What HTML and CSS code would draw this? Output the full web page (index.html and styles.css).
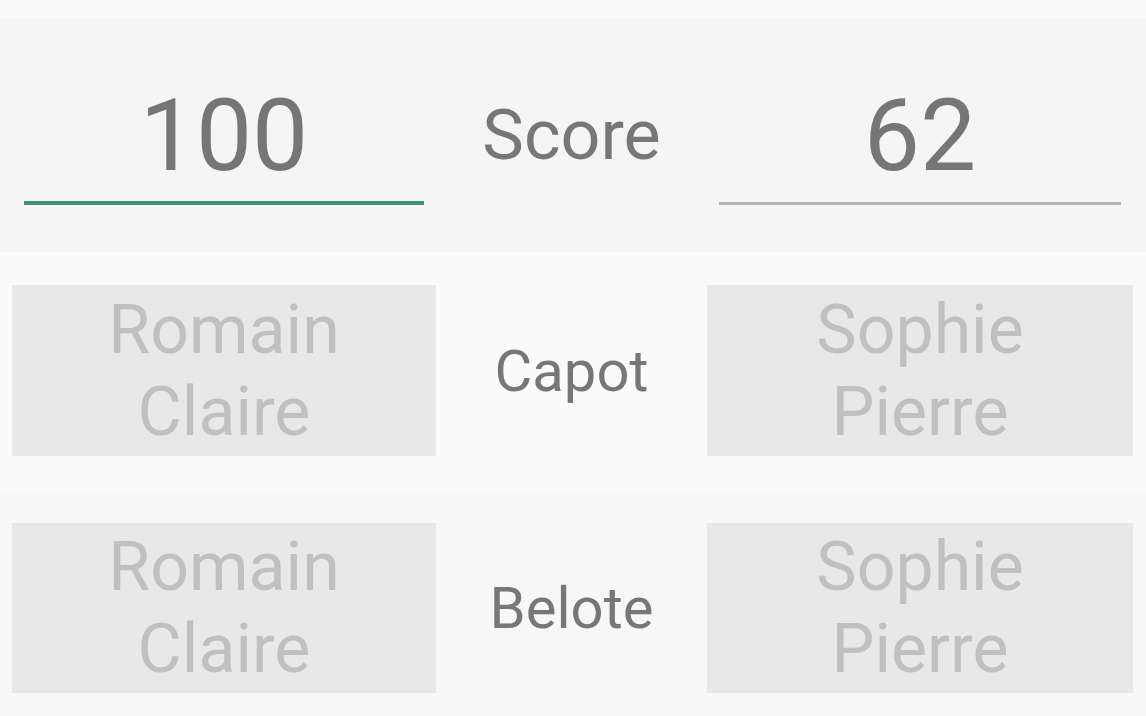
FILE: index.html
```html
<!DOCTYPE html>
<html lang="fr">
<head>
<meta charset="utf-8">
<title>Score</title>
<link rel="stylesheet" href="styles.css">
</head>
<body>
<div class="screen">
  <div class="row row-score">
    <div class="field">
      <div class="value">100</div>
      <div class="line line-active"></div>
    </div>
    <div class="label label-score">Score</div>
    <div class="field">
      <div class="value">62</div>
      <div class="line"></div>
    </div>
  </div>
  <div class="row row-capot">
    <div class="team">Romain<br>Claire</div>
    <div class="label">Capot</div>
    <div class="team">Sophie<br>Pierre</div>
  </div>
  <div class="row row-belote">
    <div class="team">Romain<br>Claire</div>
    <div class="label">Belote</div>
    <div class="team">Sophie<br>Pierre</div>
  </div>
</div>
</body>
</html>
```

FILE: styles.css
```css
html, body {
  margin: 0;
  padding: 0;
}

body {
  background: #fafafa;
  font-family: Roboto, "Noto Sans", "Liberation Sans", sans-serif;
  width: 1146px;
  height: 716px;
  overflow: hidden;
}

.screen {
  padding-top: 18px;
  display: flex;
  flex-direction: column;
}

.row {
  display: grid;
  align-items: center;
  align-content: start;
}

.row-score {
  background: #f5f5f5;
  height: 234px;
  grid-template-columns: 400px 1fr 402px;
  grid-template-rows: 234px;
  padding: 0 25px 0 24px;
  align-items: start;
}

.row-capot {
  background: #fafafa;
  height: 240px;
  box-sizing: border-box;
  padding: 33px 13px 0 12px;
  grid-template-columns: 424px 1fr 426px;
  grid-template-rows: 171px;
}

.row-belote {
  background: #f7f7f7;
  height: 224px;
  box-sizing: border-box;
  padding: 31px 13px 0 12px;
  grid-template-columns: 424px 1fr 426px;
  grid-template-rows: 170px;
}

.field {
  display: flex;
  flex-direction: column;
  align-items: stretch;
  padding-top: 68px;
}

.value {
  font-size: 100px;
  line-height: 100px;
  color: #767676;
  text-align: center;
}

.line {
  margin-top: 16px;
  height: 3px;
  background: #b4b4b4;
}

.line-active {
  margin-top: 15px;
  height: 4px;
  background: #418e7f;
}

.label {
  color: #777777;
  font-size: 58px;
  text-align: center;
}

.label-score {
  font-size: 70px;
  line-height: 234px;
  height: 234px;
}

.team {
  background: #e8e8e8;
  color: #c0c0c0;
  font-size: 68px;
  line-height: 82px;
  text-align: center;
  height: 100%;
  display: flex;
  align-items: center;
  justify-content: center;
}
```
